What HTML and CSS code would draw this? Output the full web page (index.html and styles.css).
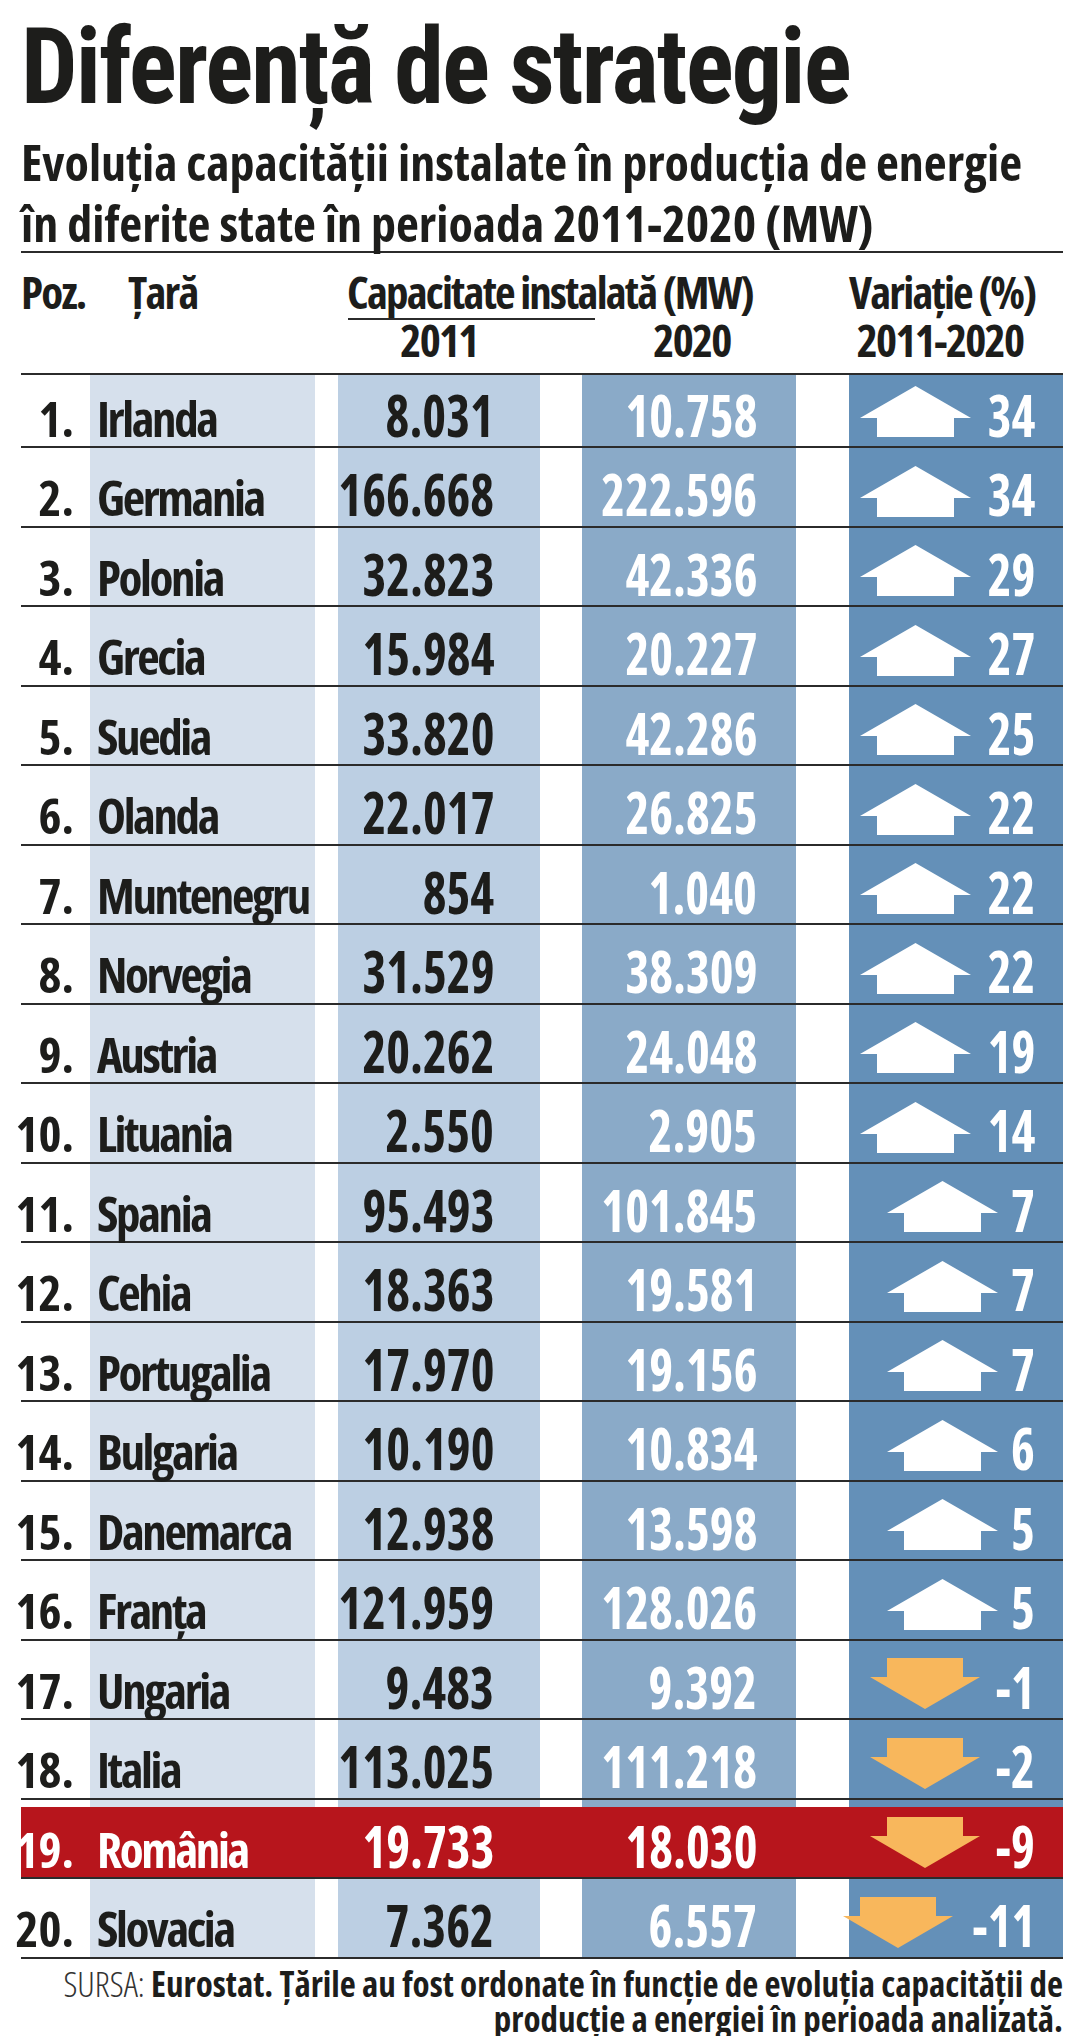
FILE: index.html
```html
<!DOCTYPE html>
<html lang="ro">
<head>
<meta charset="utf-8">
<title>Diferență de strategie</title>
<link rel="stylesheet" href="styles.css">
</head>
<body>
<div class="page">
  <h1 class="title">Diferență de strategie</h1>
  <div class="subtitle">Evoluția capacității instalate în producția de energie<br>în diferite state în perioada 2011-2020 (MW)</div>
  <div class="rule"></div>

  <div class="head">
    <div class="h-poz">Poz.</div>
    <div class="h-tara">Țară</div>
    <div class="h-cap">Capacitate instalată (MW)</div>
    <div class="h-var">Variație (%)</div>
    <div class="h-y1">2011</div>
    <div class="h-y2">2020</div>
    <div class="h-y3">2011-2020</div>
  </div>

  <div class="table">
    <div class="row first"><div class="c pos">1.</div><div class="c name">Irlanda</div><div class="c gap"></div><div class="c v11"><span class="n">8.031</span></div><div class="c gap"></div><div class="c v20"><span class="n">10.758</span></div><div class="c gap"></div><div class="c var"><svg class="arr" width="111" height="51" viewBox="0 0 111 51"><polygon class="up" points="55.5,0 111,32 94,32 94,51 17,51 17,32 0,32"/></svg><span class="n">34</span></div></div>
    <div class="row"><div class="c pos">2.</div><div class="c name">Germania</div><div class="c gap"></div><div class="c v11"><span class="n">166.668</span></div><div class="c gap"></div><div class="c v20"><span class="n">222.596</span></div><div class="c gap"></div><div class="c var"><svg class="arr" width="111" height="51" viewBox="0 0 111 51"><polygon class="up" points="55.5,0 111,32 94,32 94,51 17,51 17,32 0,32"/></svg><span class="n">34</span></div></div>
    <div class="row"><div class="c pos">3.</div><div class="c name">Polonia</div><div class="c gap"></div><div class="c v11"><span class="n">32.823</span></div><div class="c gap"></div><div class="c v20"><span class="n">42.336</span></div><div class="c gap"></div><div class="c var"><svg class="arr" width="111" height="51" viewBox="0 0 111 51"><polygon class="up" points="55.5,0 111,32 94,32 94,51 17,51 17,32 0,32"/></svg><span class="n">29</span></div></div>
    <div class="row"><div class="c pos">4.</div><div class="c name">Grecia</div><div class="c gap"></div><div class="c v11"><span class="n">15.984</span></div><div class="c gap"></div><div class="c v20"><span class="n">20.227</span></div><div class="c gap"></div><div class="c var"><svg class="arr" width="111" height="51" viewBox="0 0 111 51"><polygon class="up" points="55.5,0 111,32 94,32 94,51 17,51 17,32 0,32"/></svg><span class="n">27</span></div></div>
    <div class="row"><div class="c pos">5.</div><div class="c name">Suedia</div><div class="c gap"></div><div class="c v11"><span class="n">33.820</span></div><div class="c gap"></div><div class="c v20"><span class="n">42.286</span></div><div class="c gap"></div><div class="c var"><svg class="arr" width="111" height="51" viewBox="0 0 111 51"><polygon class="up" points="55.5,0 111,32 94,32 94,51 17,51 17,32 0,32"/></svg><span class="n">25</span></div></div>
    <div class="row"><div class="c pos">6.</div><div class="c name">Olanda</div><div class="c gap"></div><div class="c v11"><span class="n">22.017</span></div><div class="c gap"></div><div class="c v20"><span class="n">26.825</span></div><div class="c gap"></div><div class="c var"><svg class="arr" width="111" height="51" viewBox="0 0 111 51"><polygon class="up" points="55.5,0 111,32 94,32 94,51 17,51 17,32 0,32"/></svg><span class="n">22</span></div></div>
    <div class="row"><div class="c pos">7.</div><div class="c name">Muntenegru</div><div class="c gap"></div><div class="c v11"><span class="n">854</span></div><div class="c gap"></div><div class="c v20"><span class="n">1.040</span></div><div class="c gap"></div><div class="c var"><svg class="arr" width="111" height="51" viewBox="0 0 111 51"><polygon class="up" points="55.5,0 111,32 94,32 94,51 17,51 17,32 0,32"/></svg><span class="n">22</span></div></div>
    <div class="row"><div class="c pos">8.</div><div class="c name">Norvegia</div><div class="c gap"></div><div class="c v11"><span class="n">31.529</span></div><div class="c gap"></div><div class="c v20"><span class="n">38.309</span></div><div class="c gap"></div><div class="c var"><svg class="arr" width="111" height="51" viewBox="0 0 111 51"><polygon class="up" points="55.5,0 111,32 94,32 94,51 17,51 17,32 0,32"/></svg><span class="n">22</span></div></div>
    <div class="row"><div class="c pos">9.</div><div class="c name">Austria</div><div class="c gap"></div><div class="c v11"><span class="n">20.262</span></div><div class="c gap"></div><div class="c v20"><span class="n">24.048</span></div><div class="c gap"></div><div class="c var"><svg class="arr" width="111" height="51" viewBox="0 0 111 51"><polygon class="up" points="55.5,0 111,32 94,32 94,51 17,51 17,32 0,32"/></svg><span class="n">19</span></div></div>
    <div class="row"><div class="c pos">10.</div><div class="c name">Lituania</div><div class="c gap"></div><div class="c v11"><span class="n">2.550</span></div><div class="c gap"></div><div class="c v20"><span class="n">2.905</span></div><div class="c gap"></div><div class="c var"><svg class="arr" width="111" height="51" viewBox="0 0 111 51"><polygon class="up" points="55.5,0 111,32 94,32 94,51 17,51 17,32 0,32"/></svg><span class="n">14</span></div></div>
    <div class="row"><div class="c pos">11.</div><div class="c name">Spania</div><div class="c gap"></div><div class="c v11"><span class="n">95.493</span></div><div class="c gap"></div><div class="c v20"><span class="n">101.845</span></div><div class="c gap"></div><div class="c var"><svg class="arr" width="111" height="51" viewBox="0 0 111 51"><polygon class="up" points="55.5,0 111,32 94,32 94,51 17,51 17,32 0,32"/></svg><span class="n">7</span></div></div>
    <div class="row"><div class="c pos">12.</div><div class="c name">Cehia</div><div class="c gap"></div><div class="c v11"><span class="n">18.363</span></div><div class="c gap"></div><div class="c v20"><span class="n">19.581</span></div><div class="c gap"></div><div class="c var"><svg class="arr" width="111" height="51" viewBox="0 0 111 51"><polygon class="up" points="55.5,0 111,32 94,32 94,51 17,51 17,32 0,32"/></svg><span class="n">7</span></div></div>
    <div class="row"><div class="c pos">13.</div><div class="c name">Portugalia</div><div class="c gap"></div><div class="c v11"><span class="n">17.970</span></div><div class="c gap"></div><div class="c v20"><span class="n">19.156</span></div><div class="c gap"></div><div class="c var"><svg class="arr" width="111" height="51" viewBox="0 0 111 51"><polygon class="up" points="55.5,0 111,32 94,32 94,51 17,51 17,32 0,32"/></svg><span class="n">7</span></div></div>
    <div class="row"><div class="c pos">14.</div><div class="c name">Bulgaria</div><div class="c gap"></div><div class="c v11"><span class="n">10.190</span></div><div class="c gap"></div><div class="c v20"><span class="n">10.834</span></div><div class="c gap"></div><div class="c var"><svg class="arr" width="111" height="51" viewBox="0 0 111 51"><polygon class="up" points="55.5,0 111,32 94,32 94,51 17,51 17,32 0,32"/></svg><span class="n">6</span></div></div>
    <div class="row"><div class="c pos">15.</div><div class="c name">Danemarca</div><div class="c gap"></div><div class="c v11"><span class="n">12.938</span></div><div class="c gap"></div><div class="c v20"><span class="n">13.598</span></div><div class="c gap"></div><div class="c var"><svg class="arr" width="111" height="51" viewBox="0 0 111 51"><polygon class="up" points="55.5,0 111,32 94,32 94,51 17,51 17,32 0,32"/></svg><span class="n">5</span></div></div>
    <div class="row"><div class="c pos">16.</div><div class="c name">Franța</div><div class="c gap"></div><div class="c v11"><span class="n">121.959</span></div><div class="c gap"></div><div class="c v20"><span class="n">128.026</span></div><div class="c gap"></div><div class="c var"><svg class="arr" width="111" height="51" viewBox="0 0 111 51"><polygon class="up" points="55.5,0 111,32 94,32 94,51 17,51 17,32 0,32"/></svg><span class="n">5</span></div></div>
    <div class="row"><div class="c pos">17.</div><div class="c name">Ungaria</div><div class="c gap"></div><div class="c v11"><span class="n">9.483</span></div><div class="c gap"></div><div class="c v20"><span class="n">9.392</span></div><div class="c gap"></div><div class="c var"><svg class="arr" width="110" height="51" viewBox="0 0 110 51"><polygon class="down" points="17,0 93,0 93,19 110,19 55,51 0,19 17,19"/></svg><span class="n">-1</span></div></div>
    <div class="row"><div class="c pos">18.</div><div class="c name">Italia</div><div class="c gap"></div><div class="c v11"><span class="n">113.025</span></div><div class="c gap"></div><div class="c v20"><span class="n">111.218</span></div><div class="c gap"></div><div class="c var"><svg class="arr" width="110" height="51" viewBox="0 0 110 51"><polygon class="down" points="17,0 93,0 93,19 110,19 55,51 0,19 17,19"/></svg><span class="n">-2</span></div></div>
    <div class="row hl"><div class="c pos">19.</div><div class="c name">România</div><div class="c gap"></div><div class="c v11"><span class="n">19.733</span></div><div class="c gap"></div><div class="c v20"><span class="n">18.030</span></div><div class="c gap"></div><div class="c var"><svg class="arr" width="110" height="51" viewBox="0 0 110 51"><polygon class="down" points="17,0 93,0 93,19 110,19 55,51 0,19 17,19"/></svg><span class="n">-9</span></div></div>
    <div class="row"><div class="c pos">20.</div><div class="c name">Slovacia</div><div class="c gap"></div><div class="c v11"><span class="n">7.362</span></div><div class="c gap"></div><div class="c v20"><span class="n">6.557</span></div><div class="c gap"></div><div class="c var"><svg class="arr" width="110" height="51" viewBox="0 0 110 51"><polygon class="down" points="17,0 93,0 93,19 110,19 55,51 0,19 17,19"/></svg><span class="n">-11</span></div></div>
  </div>

  <div class="source"><span class="src-label">SURSA:</span> Eurostat. Țările au fost ordonate în funcție de evoluția capacității de<br>producție a energiei în perioada analizată.</div>
</div>
</body>
</html>
```
FILE: styles.css
```css
:root{
  --ink:#1d1d1b;
  --rule:#2b2b2b;
  --c-name:#d6e0ec;
  --c-11:#bccfe3;
  --c-20:#8aaac8;
  --c-var:#6490b8;
  --red:#b7151c;
  --orange:#f8b75c;
}
html,body{margin:0;padding:0;background:#fff;}
body{color:var(--ink);font-family:"Open Sans","Noto Sans",sans-serif;font-stretch:75%;font-weight:700;}
.page{width:1042px;padding:16px 12px 0 21px;}

.title{
  margin:0;
  font-family:"Roboto Condensed",Roboto,sans-serif;
  font-stretch:75%;
  font-weight:700;
  font-size:105px;
  line-height:104px;
  letter-spacing:-2px;
  white-space:nowrap;
  transform:scaleX(0.955);
  transform-origin:left center;
}
.subtitle{
  margin-top:12px;
  font-size:50px;
  line-height:61px;
  white-space:nowrap;
}
.rule{height:2px;background:var(--rule);margin-top:-3px;}

.head{
  display:grid;
  grid-template-columns:69px 225px 23px 202px 42px 214px 53px 214px;
  grid-template-rows:48px 48px;
  font-size:45px;
  line-height:48px;
  letter-spacing:-1.8px;
  padding:15px 0 9px;
  border-bottom:2px solid var(--rule);
  white-space:nowrap;
}
.h-poz{grid-column:1;grid-row:1;}
.h-tara{grid-column:2;grid-row:1;padding-left:38px;}
.h-cap{grid-column:4 / 7;grid-row:1;padding-left:9px;position:relative;}
.h-cap::after{content:"";position:absolute;left:10px;top:50px;width:247px;height:2px;background:var(--rule);}
.h-var{grid-column:8;grid-row:1;text-align:center;padding-right:32px;}
.h-y1{grid-column:4;grid-row:2;text-align:center;}
.h-y2{grid-column:6;grid-row:2;text-align:center;padding-left:6px;}
.h-y3{grid-column:8;grid-row:2;text-align:center;padding-right:32px;}

.row{
  display:grid;
  grid-template-columns:69px 225px 23px 202px 42px 214px 53px 214px;
  height:77.5px;
  border-bottom:2px solid var(--rule);
}
.row.first{height:71px;}
.c{
  display:flex;
  align-items:flex-end;
  background:var(--bg,#fff);
  white-space:nowrap;
  line-height:1;
}
.n{display:block;transform:scaleX(0.86);transform-origin:right bottom;}
.pos{--bg:#fff;justify-content:flex-end;padding-right:16px;font-size:49px;padding-bottom:3.5px;}
.name{--bg:var(--c-name);padding-left:7px;font-size:49px;padding-bottom:3.5px;letter-spacing:-2.4px;}
.gap{--bg:#fff;}
.v11{--bg:var(--c-11);justify-content:flex-end;padding-right:46px;font-size:59px;padding-bottom:2.4px;}
.v20{--bg:var(--c-20);justify-content:flex-end;padding-right:39px;font-size:59px;padding-bottom:2.4px;color:#fff;}
.var{--bg:var(--c-var);justify-content:flex-end;padding-right:28px;font-size:59px;padding-bottom:2.4px;color:#fff;gap:9px;}
.arr{display:block;margin-bottom:6.6px;flex:none;}
.up{fill:#fff;}
.down{fill:var(--orange);}

.row.hl .c{background:linear-gradient(to bottom,var(--bg,#fff) 0,var(--bg,#fff) 7px,var(--red) 7px);color:#fff;}

.source{
  margin-top:7px;
  text-align:right;
  font-size:35px;
  line-height:35px;
  white-space:nowrap;
}
.src-label{font-weight:300;color:#333;}
```
